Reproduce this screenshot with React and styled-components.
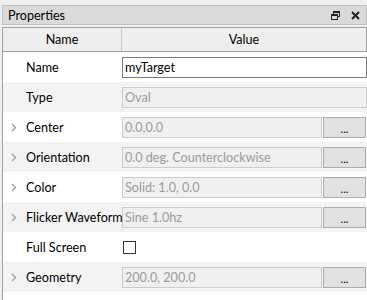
import React from 'react';
import styled, { createGlobalStyle } from 'styled-components';

const GlobalStyle = createGlobalStyle`
  html, body {
    margin: 0;
    padding: 0;
    background: #f0f0f0;
  }
  body {
    font-family: Lato, "Open Sans", sans-serif;
    font-size: 12.6px;
    color: #000;
  }
`;

const Panel = styled.div`
  width: 365px;
  height: 300px;
  padding: 5px 0 0 2px;
  overflow: hidden;
`;

const TitleBar = styled.div`
  height: 18px;
  display: flex;
  align-items: center;
  justify-content: space-between;
  background: #dadada;
  border: 1px solid #c2c2c2;
  padding: 0 0 0 5px;
  margin-bottom: 2px;
`;

const Title = styled.span`
  color: #000;
`;

const TitleIcons = styled.div`
  display: flex;
  align-items: center;
  gap: 11px;
  padding-right: 6px;
`;

const Grid = styled.div`
  border-left: 1px solid #a0a0a0;
  border-top: 1px solid #a0a0a0;
  background: #fff;
  height: 280px;
`;

const Header = styled.div`
  display: grid;
  grid-template-columns: 118px 1fr;
  height: 23px;
  background: #eeeeee;
  border-bottom: 1px solid #a0a0a0;
  border-right: 1px solid #a0a0a0;
`;

const HeaderCell = styled.div`
  display: flex;
  align-items: center;
  justify-content: center;
  border-left: ${p => (p.$divider ? '1px solid #c8c8c8' : 'none')};
`;

const Row = styled.div`
  display: grid;
  grid-template-columns: 119px 1fr;
  height: 30px;
  background: ${p => (p.$alt ? '#f3f3f3' : '#ffffff')};
`;

const LabelCell = styled.div`
  display: flex;
  align-items: center;
  position: relative;
  padding-left: 23px;
  white-space: nowrap;
`;

const Chevron = styled.svg`
  position: absolute;
  left: 8px;
  top: 11px;
`;

const ValueCell = styled.div`
  display: flex;
  align-items: center;
  gap: 1px;
`;

const Field = styled.div`
  box-sizing: border-box;
  height: 21px;
  width: ${p => (p.$wide ? '245px' : '200px')};
  display: flex;
  align-items: center;
  padding-left: 2px;
  background: ${p => (p.$editable ? '#fff' : '#f0f0f0')};
  border: 1px solid ${p => (p.$editable ? '#7a7a7a' : '#cccccc')};
  color: ${p => (p.$editable ? '#000' : '#9b9b9b')};
  white-space: nowrap;
  overflow: hidden;
`;

const DotsButton = styled.div`
  box-sizing: border-box;
  width: 43px;
  height: 21px;
  background: #e1e1e1;
  border: 1px solid #adadad;
  display: flex;
  align-items: center;
  justify-content: center;
  font-size: 11px;
  color: #000;
  padding-top: 2px;
`;

const CheckBox = styled.div`
  box-sizing: border-box;
  width: 13px;
  height: 13px;
  border: 1px solid #333;
  background: #fff;
  margin-left: 1px;
`;

const rows = [
  { label: 'Name', value: 'myTarget', kind: 'edit' },
  { label: 'Type', value: 'Oval', kind: 'wide' },
  { label: 'Center', value: '0.0,0.0', kind: 'button', expand: true },
  { label: 'Orientation', value: '0.0 deg. Counterclockwise', kind: 'button', expand: true },
  { label: 'Color', value: 'Solid: 1.0, 0.0', kind: 'button', expand: true },
  { label: 'Flicker Waveform', value: 'Sine 1.0hz', kind: 'button', expand: true },
  { label: 'Full Screen', kind: 'check' },
  { label: 'Geometry', value: '200.0, 200.0', kind: 'button', expand: true },
];

const RestoreIcon = () => (
  <svg width="9" height="9" viewBox="0 0 9 9">
    <rect x="2.5" y="0.5" width="6" height="5" fill="none" stroke="#222" />
    <rect x="2.5" y="0.5" width="6" height="1.5" fill="#222" />
    <rect x="0.5" y="3.5" width="6" height="5" fill="#dadada" stroke="#222" />
    <rect x="0.5" y="3.5" width="6" height="1.5" fill="#222" />
  </svg>
);

const CloseIcon = () => (
  <svg width="9" height="9" viewBox="0 0 9 9">
    <path d="M1 1 L8 8 M8 1 L1 8" stroke="#222" strokeWidth="2" />
  </svg>
);

const Value = ({ row }) => {
  if (row.kind === 'check') return <CheckBox />;
  if (row.kind === 'edit') return <Field $wide $editable>{row.value}</Field>;
  if (row.kind === 'wide') return <Field $wide>{row.value}</Field>;
  return (
    <>
      <Field>{row.value}</Field>
      <DotsButton>...</DotsButton>
    </>
  );
};

export default function App() {
  return (
    <Panel>
      <GlobalStyle />
      <TitleBar>
        <Title>Properties</Title>
        <TitleIcons>
          <RestoreIcon />
          <CloseIcon />
        </TitleIcons>
      </TitleBar>
      <Grid>
        <Header>
          <HeaderCell>Name</HeaderCell>
          <HeaderCell $divider>Value</HeaderCell>
        </Header>
        {rows.map((row, i) => (
          <Row key={row.label} $alt={i % 2 === 1}>
            <LabelCell>
              {row.expand && (
                <Chevron width="6" height="9" viewBox="0 0 6 9">
                  <path d="M1 1 L4.5 4.5 L1 8" fill="none" stroke="#a5a5a5" strokeWidth="1.5" />
                </Chevron>
              )}
              {row.label}
            </LabelCell>
            <ValueCell>
              <Value row={row} />
            </ValueCell>
          </Row>
        ))}
      </Grid>
    </Panel>
  );
}
